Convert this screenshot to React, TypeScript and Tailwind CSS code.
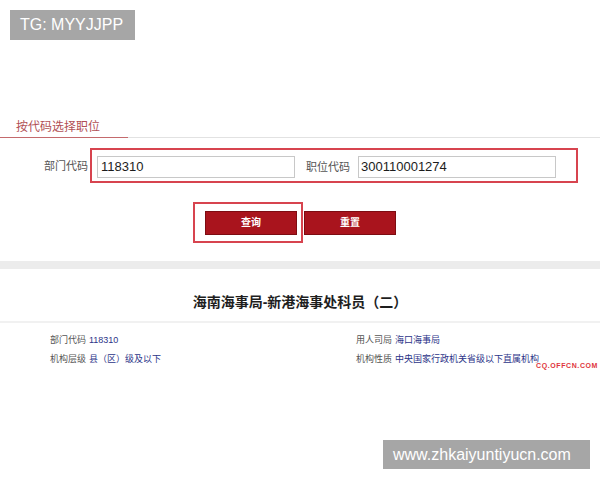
// 职位查询页：按代码选择职位 + 查询结果
const cn = "font-['Liberation_Sans','Noto_Sans_CJK_SC',sans-serif]";

function InfoItem({ label, value }: { label: string; value: string }) {
  return (
    <div className="flex gap-[3px] leading-[19px]">
      <span className="text-[#555]">{label}</span>
      <span className="text-[#2c3488]">{value}</span>
    </div>
  );
}

export default function App() {
  return (
    <div className={`relative w-[600px] h-[480px] overflow-hidden bg-white ${cn}`}>
      {/* 左上角标签 */}
      <div className="absolute left-[10px] top-[10px] w-[125px] h-[30px] bg-[#a6a6a6] pl-[10px] text-[16px] leading-[30px] text-white">
        TG: MYYJJPP
      </div>

      {/* 选项卡 */}
      <div className="pt-[117px]">
        <div className="flex border-b border-[#e2e2e2]">
          <div className="w-[128px] -mb-px border-b border-[#c46a6d] pl-[16px] text-[12px] leading-[20px] text-[#b14f55]">
            按代码选择职位
          </div>
        </div>
      </div>

      {/* 查询条件 */}
      <div className="mt-[10px] flex items-center">
        <div className="w-[90px] pr-[2px] pt-[2px] text-right text-[11px] text-[#555]">部门代码</div>
        <div className="flex h-[35px] w-[488px] items-start border-2 border-[#d7444f] pl-[5px] pt-[6px]">
          <div className="h-[22px] w-[198px] border border-[#c8c8c8] pl-[3px] text-[13px] font-medium leading-[20px] text-[#1c1c1c]">
            118310
          </div>
          <div className="ml-[11px] w-[52px] text-[11px] leading-[22px] text-[#555]">职位代码</div>
          <div className="h-[22px] w-[198px] border border-[#c8c8c8] pl-[2px] text-[13px] font-medium leading-[20px] text-[#1c1c1c]">
            300110001274
          </div>
        </div>
      </div>

      {/* 按钮 */}
      <div className="mt-[19px] flex items-center">
        <div className="ml-[193px] flex h-[41px] w-[110px] items-center border-2 border-[#d7444f] pl-[10px]">
          <button className="h-[24px] w-[92px] border border-[#7d0c12] bg-[#a9141d] text-[10px] font-bold text-white">
            查询
          </button>
        </div>
        <button className="ml-px h-[24px] w-[92px] border border-[#7d0c12] bg-[#a9141d] text-[10px] font-bold text-white">
          重置
        </button>
      </div>

      <div className="mt-[18px] h-[8px] bg-[#ececec]" />

      {/* 查询结果 */}
      <h2 className="mt-[23px] text-center text-[14px] font-bold leading-[20px] text-[#1e1e1e]">
        海南海事局-新港海事处科员（二）
      </h2>
      <div className="mt-[9px] h-[2px] bg-[#f1f1f1]" />

      <div className="relative mt-[8px] grid grid-cols-[306px_1fr] pl-[50px] text-[9px]">
        <div>
          <InfoItem label="部门代码" value="118310" />
          <InfoItem label="机构层级" value="县（区）级及以下" />
        </div>
        <div>
          <InfoItem label="用人司局" value="海口海事局" />
          <InfoItem label="机构性质" value="中央国家行政机关省级以下直属机构" />
        </div>
        <span className="absolute left-[536px] top-[31px] bg-white/70 text-[7px] font-bold tracking-[0.6px] leading-none text-[#e0353c]">
          CQ.OFFCN.COM
        </span>
      </div>

      {/* 右下角水印 */}
      <div className="absolute left-[383px] top-[440px] h-[29px] w-[207px] bg-[#a6a6a6] pl-[10px] text-[16px] leading-[29px] text-white">
        www.zhkaiyuntiyucn.com
      </div>
    </div>
  );
}
